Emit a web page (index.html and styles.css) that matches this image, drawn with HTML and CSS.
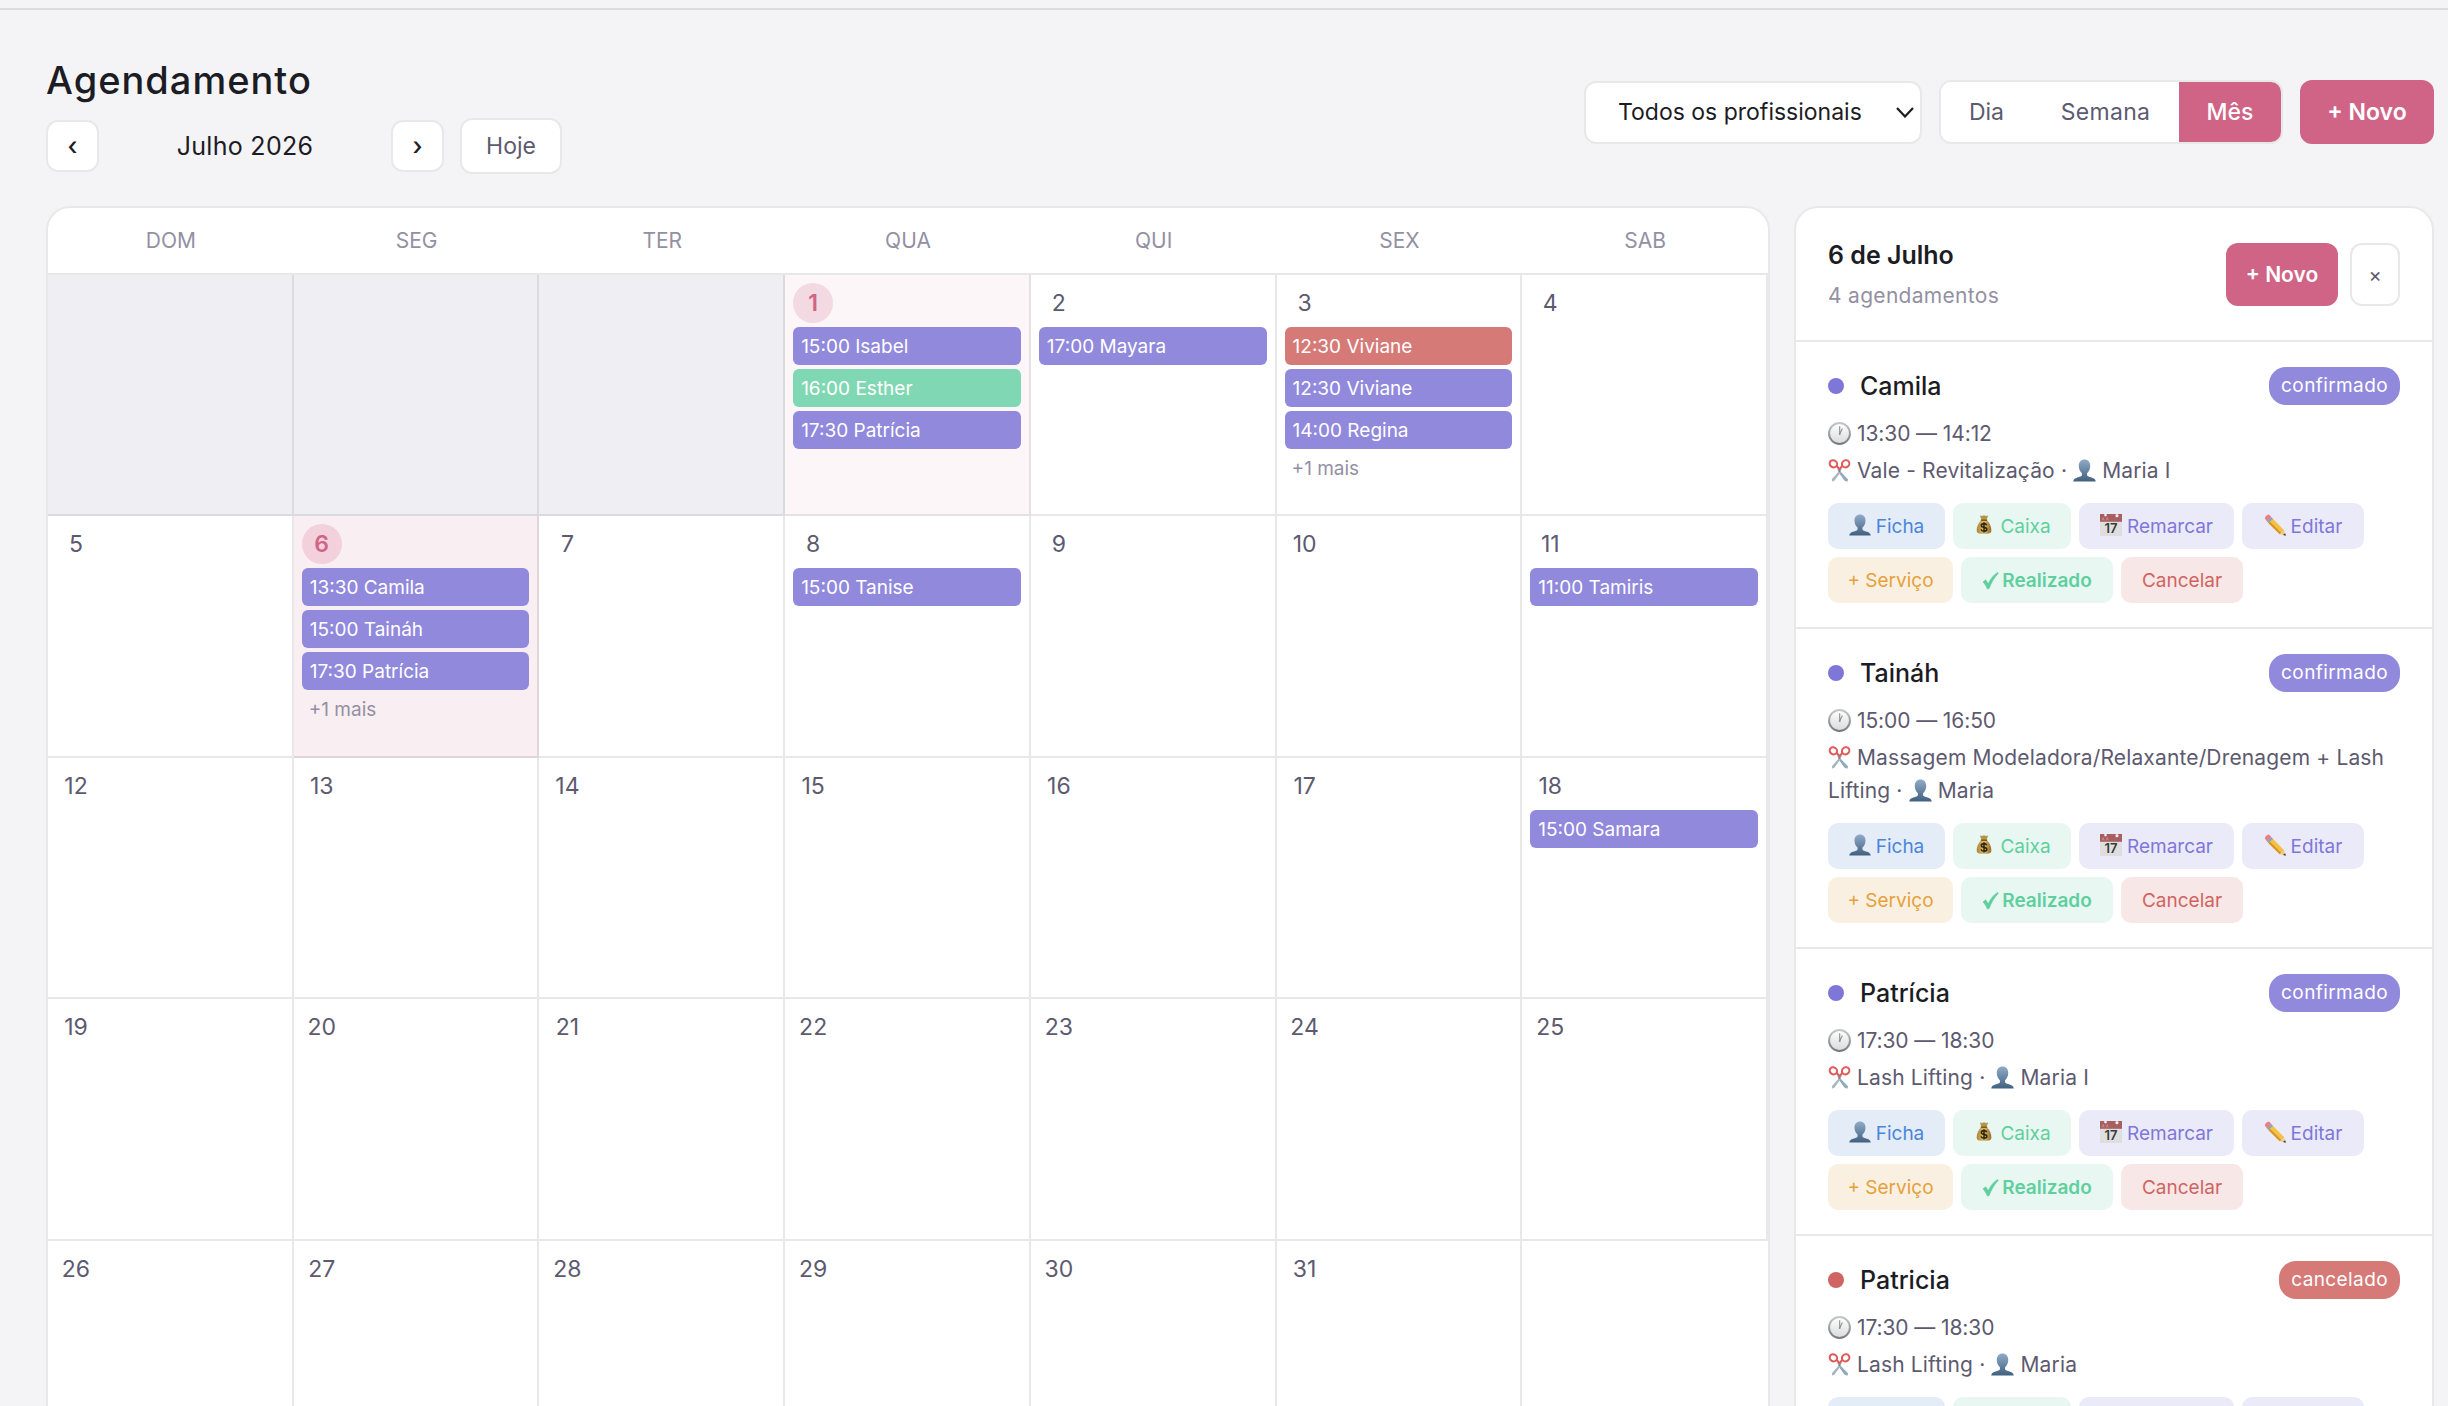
FILE: index.html
```html
<!DOCTYPE html>
<html lang="pt-BR">
  <head>
    <meta charset="utf-8">
    <title>Agendamento</title>
    <link rel="stylesheet" href="styles.css">
  </head>
  <body>
    <!-- icons -->
    <svg class="defs" width="0" height="0">
      <defs>
        <linearGradient id="gPerson" x1="0" y1="0" x2="0" y2="1">
          <stop offset="0" stop-color="#8fabc8" />
          <stop offset="1" stop-color="#42617f" />
        </linearGradient>
        <linearGradient id="gFace" x1="0" y1="0" x2="0" y2="1">
          <stop offset="0" stop-color="#ffffff" />
          <stop offset="1" stop-color="#d9dadb" />
        </linearGradient>
        <linearGradient id="gRim" x1="0" y1="0" x2="0" y2="1">
          <stop offset="0" stop-color="#c3c6ca" />
          <stop offset="1" stop-color="#77797c" />
        </linearGradient>
        <linearGradient id="gBag" x1="0" y1="0" x2="1" y2="0">
          <stop offset="0" stop-color="#a98538" />
          <stop offset="0.5" stop-color="#e0bf6b" />
          <stop offset="1" stop-color="#8d6b28" />
        </linearGradient>
      </defs>
      <symbol id="person" viewBox="0 0 24 24">
        <path fill="url(#gPerson)" d="M12 .5c-3.600 0-6 2.700-6 6.500 0 3.100 1.300 6.300 3.300 7.800v2.200c-.4 1.100-2.300 1.600-4.800 2.300C1.700 20.100.5 21.200.3 23.500h23.400c-.2-2.300-1.400-3.400-4.200-4.200-2.500-.7-4.400-1.200-4.800-2.300v-2.200C16.700 13.300 18 10.100 18 7c0-3.800-2.400-6.500-6-6.500z" />
      </symbol>
      <symbol id="clock" viewBox="0 0 24 24">
        <circle cx="12" cy="12" r="10.900" fill="url(#gFace)" stroke="url(#gRim)" stroke-width="2.100" />
        <path d="M12.200 12.500V4.500M12.200 12.500L15 6.800" stroke="#8c8c8c" stroke-width="1.100" fill="none" />
        <circle cx="12.200" cy="12.500" r="1" fill="#8c8c8c" />
      </symbol>
      <symbol id="scissors" viewBox="0 0 24 24">
        <path d="M9.300 9.200L21 21.500l-.9 2.300-3.100-1.300-5.800-8.500z" fill="#8fa9bf" />
        <path d="M14.700 9.200L4.200 20.800l.2 3.000 2.600-1.700L12.900 14z" fill="#a9b4bf" />
        <g fill="none" stroke="#de5a59" stroke-width="2.100">
          <ellipse cx="5.600" cy="5" rx="4" ry="3.600" transform="rotate(35 5.600 5)" />
          <ellipse cx="18.400" cy="5" rx="4" ry="3.600" transform="rotate(-35 18.400 5)" />
          <path d="M9 7l3.400 4.300M15 7l-3.400 4.300" />
        </g>
        <circle cx="12" cy="12.600" r=".9" fill="#6d7f90" />
      </symbol>
      <symbol id="bag" viewBox="0 0 24 24">
        <path d="M7.500 1.500l2.300.7L12 1.300l2.300.9 2.300-.7-1.900 5h-5.400z" fill="#b5954a" />
        <path d="M9.300 6.500C5.800 9.500 3.800 14.300 4 18.400c.2 2.400 1.900 3.400 8 3.400s7.800-1 8-3.400c.2-4.100-1.800-8.900-5.300-11.900z" fill="url(#gBag)" />
        <path d="M8.500 6.800h7" stroke="#7a5a1e" stroke-width="1.600" />
        <path d="M15 12.200c-.5-1.300-1.600-1.700-3-1.700-1.700 0-2.900.7-2.900 2 0 2.900 6 1.300 6 4.100 0 1.400-1.300 2.100-3.100 2.100-1.500 0-2.800-.5-3.200-1.900M12 9.100v11" stroke="#33280f" stroke-width="1.700" fill="none" />
      </symbol>
      <symbol id="cal" viewBox="0 0 24 24">
        <rect x="0" y="0" width="24" height="24" fill="#dedede" />
        <rect x="0" y="0" width="24" height="8.500" fill="#a85f60" />
        <path d="M2.500 7l1-3 1 3M7 7l1-3 1 3" stroke="#cf9c9c" stroke-width=".8" fill="none" />
        <circle cx="6" cy="1.200" r="1.500" fill="#f3eeee" />
        <circle cx="18.500" cy="1.800" r="1.700" fill="#f3eeee" />
      </symbol>
      <symbol id="pencil" viewBox="0 0 24 24">
        <path d="M.8 4.800C1.300 2.500 3 .9 5.500.6l2.900 3.200-5 4.400z" fill="#e8808a" />
        <path d="M3.200 8l5.100-4.400 1.800 2-5 4.500z" fill="#8fa6b2" />
        <path d="M5 10l5-4.500 12 12.300-4.800 4.300z" fill="#f4c243" />
        <path d="M5 10l1.700-1.500 12.200 12.100-1.700 1.500z" fill="#d5952a" />
        <path d="M17.200 22.100l4.800-4.300 1.700 5.900z" fill="#ecca9c" />
        <path d="M20.800 23l2.300-2 .7 2.800z" fill="#3a3230" />
      </symbol>
      <symbol id="check" viewBox="0 0 18 20">
        <path d="M1 11.500l3-2.200 2.600 4.200C9 8.300 12 4.300 16.500 1.500l.8.800C13 7 10 12 7.600 18.500l-1.900.6C4.500 16 3 13.500 1 11.500z" fill="#5fcf9f" stroke="#5fcf9f" stroke-width=".6" />
      </symbol>
    </svg>

    <div class="topline"></div>
    <main class="page">
      <header class="header">
        <div class="header-left">
          <h1 class="title">Agendamento</h1>
          <div class="nav">
            <button class="btn nav-btn">‹</button>
            <span class="month">Julho 2026</span>
            <button class="btn nav-btn">›</button>
            <button class="btn today-btn">Hoje</button>
          </div>
        </div>
        <div class="header-right">
          <div class="select">
            <span>Todos os profissionais</span>
            <svg width="18" height="11" viewBox="0 0 18 11"><path d="M1 1l8 8.500L17 1" fill="none" stroke="#1c1c28" stroke-width="2.200" /></svg>
          </div>
          <div class="views">
            <button class="view view-dia">Dia</button>
            <button class="view view-semana">Semana</button>
            <button class="view view-mes active">Mês</button>
          </div>
          <button class="new-btn">+ Novo</button>
        </div>
      </header>

      <div class="content">
        <section class="calendar">
          <div class="weekdays">
            <span>DOM</span><span>SEG</span><span>TER</span><span>QUA</span><span>QUI</span><span>SEX</span><span>SAB</span>
          </div>
          <div class="days">
            <div class="day other"></div>
            <div class="day other"></div>
            <div class="day other"></div>
            <div class="day today">
              <span class="num">1</span>
              <div class="event confirmed">15:00 Isabel</div>
              <div class="event done">16:00 Esther</div>
              <div class="event confirmed">17:30 Patrícia</div>
            </div>
            <div class="day">
              <span class="num">2</span>
              <div class="event confirmed">17:00 Mayara</div>
            </div>
            <div class="day">
              <span class="num">3</span>
              <div class="event canceled">12:30 Viviane</div>
              <div class="event confirmed">12:30 Viviane</div>
              <div class="event confirmed">14:00 Regina</div>
              <div class="more">+1 mais</div>
            </div>
            <div class="day"><span class="num">4</span></div>

            <div class="day"><span class="num">5</span></div>
            <div class="day selected">
              <span class="num">6</span>
              <div class="event confirmed">13:30 Camila</div>
              <div class="event confirmed">15:00 Taináh</div>
              <div class="event confirmed">17:30 Patrícia</div>
              <div class="more">+1 mais</div>
            </div>
            <div class="day"><span class="num">7</span></div>
            <div class="day">
              <span class="num">8</span>
              <div class="event confirmed">15:00 Tanise</div>
            </div>
            <div class="day"><span class="num">9</span></div>
            <div class="day"><span class="num">10</span></div>
            <div class="day">
              <span class="num">11</span>
              <div class="event confirmed">11:00 Tamiris</div>
            </div>

            <div class="day"><span class="num">12</span></div>
            <div class="day"><span class="num">13</span></div>
            <div class="day"><span class="num">14</span></div>
            <div class="day"><span class="num">15</span></div>
            <div class="day"><span class="num">16</span></div>
            <div class="day"><span class="num">17</span></div>
            <div class="day">
              <span class="num">18</span>
              <div class="event confirmed">15:00 Samara</div>
            </div>

            <div class="day"><span class="num">19</span></div>
            <div class="day"><span class="num">20</span></div>
            <div class="day"><span class="num">21</span></div>
            <div class="day"><span class="num">22</span></div>
            <div class="day"><span class="num">23</span></div>
            <div class="day"><span class="num">24</span></div>
            <div class="day"><span class="num">25</span></div>

            <div class="day"><span class="num">26</span></div>
            <div class="day"><span class="num">27</span></div>
            <div class="day"><span class="num">28</span></div>
            <div class="day"><span class="num">29</span></div>
            <div class="day"><span class="num">30</span></div>
            <div class="day"><span class="num">31</span></div>
          </div>
        </section>

        <aside class="panel">
          <div class="panel-head">
            <div>
              <h2 class="panel-title">6 de Julho</h2>
              <p class="panel-sub">4 agendamentos</p>
            </div>
            <div class="panel-actions">
              <button class="new-btn small">+ Novo</button>
              <button class="btn close-btn">×</button>
            </div>
          </div>

          <article class="item">
            <div class="item-top">
              <span class="dot"></span>
              <h3 class="name">Camila</h3>
              <span class="badge">confirmado</span>
            </div>
            <p class="info time"><svg class="ico"><use href="#clock" /></svg>13:30 — 14:12</p>
            <p class="info"><svg class="ico"><use href="#scissors" /></svg>Vale - Revitalização · <svg class="ico"><use href="#person" /></svg>Maria I</p>
            <div class="actions">
              <button class="action ficha"><svg class="ico"><use href="#person" /></svg>Ficha</button>
              <button class="action caixa"><svg class="ico"><use href="#bag" /></svg>Caixa</button>
              <button class="action remarcar"><svg class="ico"><use href="#cal" /><text x="11" y="19" text-anchor="middle" class="cal-num">17</text></svg>Remarcar</button>
              <button class="action editar"><svg class="ico"><use href="#pencil" /></svg>Editar</button>
              <button class="action servico">+ Serviço</button>
              <button class="action realizado"><svg class="ico-check"><use href="#check" /></svg>Realizado</button>
              <button class="action cancelar">Cancelar</button>
            </div>
          </article>

          <article class="item">
            <div class="item-top">
              <span class="dot"></span>
              <h3 class="name">Taináh</h3>
              <span class="badge">confirmado</span>
            </div>
            <p class="info time"><svg class="ico"><use href="#clock" /></svg>15:00 — 16:50</p>
            <p class="info"><svg class="ico"><use href="#scissors" /></svg>Massagem Modeladora/Relaxante/Drenagem + Lash<br>Lifting · <svg class="ico"><use href="#person" /></svg>Maria</p>
            <div class="actions">
              <button class="action ficha"><svg class="ico"><use href="#person" /></svg>Ficha</button>
              <button class="action caixa"><svg class="ico"><use href="#bag" /></svg>Caixa</button>
              <button class="action remarcar"><svg class="ico"><use href="#cal" /><text x="11" y="19" text-anchor="middle" class="cal-num">17</text></svg>Remarcar</button>
              <button class="action editar"><svg class="ico"><use href="#pencil" /></svg>Editar</button>
              <button class="action servico">+ Serviço</button>
              <button class="action realizado"><svg class="ico-check"><use href="#check" /></svg>Realizado</button>
              <button class="action cancelar">Cancelar</button>
            </div>
          </article>

          <article class="item">
            <div class="item-top">
              <span class="dot"></span>
              <h3 class="name">Patrícia</h3>
              <span class="badge">confirmado</span>
            </div>
            <p class="info time"><svg class="ico"><use href="#clock" /></svg>17:30 — 18:30</p>
            <p class="info"><svg class="ico"><use href="#scissors" /></svg>Lash Lifting · <svg class="ico"><use href="#person" /></svg>Maria I</p>
            <div class="actions">
              <button class="action ficha"><svg class="ico"><use href="#person" /></svg>Ficha</button>
              <button class="action caixa"><svg class="ico"><use href="#bag" /></svg>Caixa</button>
              <button class="action remarcar"><svg class="ico"><use href="#cal" /><text x="11" y="19" text-anchor="middle" class="cal-num">17</text></svg>Remarcar</button>
              <button class="action editar"><svg class="ico"><use href="#pencil" /></svg>Editar</button>
              <button class="action servico">+ Serviço</button>
              <button class="action realizado"><svg class="ico-check"><use href="#check" /></svg>Realizado</button>
              <button class="action cancelar">Cancelar</button>
            </div>
          </article>

          <article class="item">
            <div class="item-top">
              <span class="dot red"></span>
              <h3 class="name">Patricia</h3>
              <span class="badge red">cancelado</span>
            </div>
            <p class="info time"><svg class="ico"><use href="#clock" /></svg>17:30 — 18:30</p>
            <p class="info"><svg class="ico"><use href="#scissors" /></svg>Lash Lifting · <svg class="ico"><use href="#person" /></svg>Maria</p>
            <div class="actions">
              <button class="action ficha"></button>
              <button class="action caixa"></button>
              <button class="action remarcar"></button>
              <button class="action editar"></button>
            </div>
          </article>
        </aside>
      </div>
    </main>
  </body>
</html>
```
FILE: styles.css
```css
* {
  box-sizing: border-box;
}
body {
  margin: 0;
  height: 1406px;
  overflow: hidden;
  background-color: #f4f4f6;
  color: #1c1c24;
  font-family: Inter, "Liberation Sans", sans-serif;
  font-size: 23px;
}
h1, h2, h3, p {
  margin: 0;
}
button {
  font-family: inherit;
  padding: 0;
  border: none;
  cursor: pointer;
}
.defs {
  display: block;
}
.topline {
  height: 2px;
  margin-top: 8px;
  background-color: #dddde0;
}
.page {
  padding: 44px 14px 0 46px;
}

/* Header */
.header {
  display: flex;
  justify-content: space-between;
  height: 152px;
}
.title {
  height: 52px;
  line-height: 52px;
  font-size: 38px;
  font-weight: 500;
  letter-spacing: 1px;
}
.nav {
  display: flex;
  align-items: center;
  gap: 16px;
  margin-top: 12px;
}
.btn {
  background-color: #fff;
  border: 2px solid #e8e8e8;
  border-radius: 12px;
}
.nav-btn {
  width: 53px;
  height: 52px;
  font-size: 25px;
  font-weight: 500;
  color: #1c1c24;
}
.month {
  width: 260px;
  text-align: center;
  font-size: 25px;
  letter-spacing: 0.3px;
}
.today-btn {
  width: 102px;
  height: 56px;
  font-size: 23px;
  color: #5d5a70;
}
.header-right {
  display: flex;
  align-items: center;
  gap: 17px;
  height: 64px;
  margin-top: 26px;
}
.select {
  display: flex;
  align-items: center;
  justify-content: space-between;
  width: 338px;
  height: 63px;
  padding: 0 6px 0 32px;
  background-color: #fff;
  border: 2px solid #e8e8e8;
  border-radius: 12px;
}
.views {
  display: flex;
  width: 344px;
  height: 64px;
  overflow: hidden;
  background-color: #fff;
  border: 2px solid #e8e8e8;
  border-radius: 12px;
}
.view {
  background-color: #fff;
  color: #5d5a70;
  font-size: 23px;
}
.view-dia {
  width: 91px;
}
.view-semana {
  width: 147px;
  letter-spacing: 0.3px;
}
.view-mes {
  flex: 1;
}
.view.active {
  background-color: #cf6487;
  color: #fff;
  font-weight: 500;
}
.new-btn {
  width: 134px;
  height: 64px;
  background-color: #cf6487;
  color: #fff;
  border-radius: 12px;
  font-size: 23px;
  font-weight: 600;
}

/* Calendar */
.content {
  display: flex;
  justify-content: space-between;
  align-items: flex-start;
}
.calendar {
  width: 1724px;
  height: 1300px;
  overflow: hidden;
  background-color: #fff;
  border: 2px solid #e8e8e8;
  border-radius: 24px;
}
.weekdays {
  display: grid;
  grid-template-columns: repeat(7, 1fr);
  height: 67px;
  line-height: 65px;
  border-bottom: 2px solid #e8e8e8;
  text-align: center;
  font-size: 21px;
  color: #9490a3;
}
.days {
  display: grid;
  grid-template-columns: repeat(7, 1fr);
  grid-auto-rows: 241.4px;
}
.day {
  padding: 8px;
  border-right: 2px solid #e8e8e8;
  border-bottom: 2px solid #e8e8e8;
}
.day.other {
  background-color: #efeef3;
  border-color: #dadadf;
}
.day.today {
  background-color: #fcf6f8;
  border-color: #e6e0e2;
}
.day.selected {
  background-color: #f9eef2;
  border-color: #e2d5da;
}
.num {
  display: block;
  width: 40px;
  height: 40px;
  margin-bottom: 4px;
  border-radius: 50%;
  line-height: 40px;
  text-align: center;
  font-size: 23px;
  color: #5d5a70;
}
.today .num, .selected .num {
  background-color: #f3d9e2;
  color: #cf6487;
  font-weight: 600;
}
.selected .num {
  background-color: #f2d1dc;
}
.event {
  height: 38px;
  margin-bottom: 4px;
  padding-left: 8px;
  border-radius: 6px;
  line-height: 39px;
  font-size: 19px;
  color: #fff;
  white-space: nowrap;
}
.confirmed {
  background-color: #9189dc;
}
.done {
  background-color: #7fd8b3;
}
.canceled {
  background-color: #d67a77;
}
.more {
  padding-left: 7px;
  line-height: 31px;
  font-size: 19px;
  color: #9490a3;
}

/* Day panel */
.panel {
  width: 640px;
  height: 1300px;
  background-color: #fff;
  border: 2px solid #e8e8e8;
  border-radius: 24px;
}
.panel-head {
  display: flex;
  justify-content: space-between;
  height: 134px;
  padding: 28px 32px 0 32px;
  border-bottom: 2px solid #e8e8e8;
}
.panel-title {
  line-height: 38px;
  font-size: 25px;
  font-weight: 600;
}
.panel-sub {
  margin-top: 5px;
  line-height: 34px;
  font-size: 21px;
  letter-spacing: 0.3px;
  color: #9490a3;
}
.panel-actions {
  display: flex;
  gap: 12px;
  margin-top: 7px;
}
.new-btn.small {
  width: 112px;
  height: 63px;
  font-size: 21px;
}
.close-btn {
  width: 50px;
  height: 63px;
  font-size: 20px;
  color: #5d5a70;
}
.item {
  padding: 25px 32px 24px;
  border-bottom: 2px solid #e8e8e8;
}
.item-top {
  display: flex;
  align-items: center;
  height: 38px;
  margin-bottom: 12px;
}
.dot {
  width: 16px;
  height: 16px;
  margin-right: 16px;
  border-radius: 50%;
  background-color: #7f77d8;
}
.dot.red {
  background-color: #cf6461;
}
.name {
  flex: 1;
  font-size: 25px;
  font-weight: 500;
}
.badge {
  height: 38px;
  padding: 0 12px;
  border-radius: 17px;
  background-color: #9189dc;
  color: #fff;
  line-height: 38px;
  font-size: 19px;
  letter-spacing: 0.4px;
}
.badge.red {
  background-color: #d67a77;
}
.info {
  margin-bottom: 4px;
  line-height: 33px;
  font-size: 21px;
  letter-spacing: 0.15px;
  color: #5d5a70;
  white-space: nowrap;
}
.time {
  letter-spacing: -0.1px;
}
.ico {
  width: 23px;
  height: 23px;
  margin-right: 6px;
  vertical-align: -4px;
}
.actions {
  display: flex;
  flex-wrap: wrap;
  gap: 8px;
  margin-top: 16px;
}
.action {
  display: flex;
  align-items: center;
  justify-content: center;
  height: 46px;
  border-radius: 10px;
  font-size: 19px;
}
.action .ico {
  width: 22px;
  height: 22px;
  margin: -3px 5px 0 0;
}
.ico-check {
  width: 17px;
  height: 19px;
  margin-right: 3px;
}
.cal-num {
  font-size: 13px;
  font-weight: 600;
  fill: #3a3a3a;
}
.ficha {
  width: 117px;
  background-color: #e4ecf8;
  color: #4a86d8;
}
.caixa {
  width: 118px;
  background-color: #e8f7f1;
  color: #5fcf9f;
}
.remarcar {
  width: 155px;
  background-color: #ebeaf8;
  color: #7f77d8;
}
.editar {
  width: 122px;
  background-color: #ebeaf8;
  color: #7f77d8;
}
.servico {
  width: 125px;
  background-color: #faf0e1;
  color: #e5a13d;
}
.realizado {
  width: 152px;
  background-color: #e8f7f1;
  color: #5fcf9f;
  font-weight: 600;
}
.cancelar {
  width: 122px;
  background-color: #f8e7e7;
  color: #cf6461;
}
```
